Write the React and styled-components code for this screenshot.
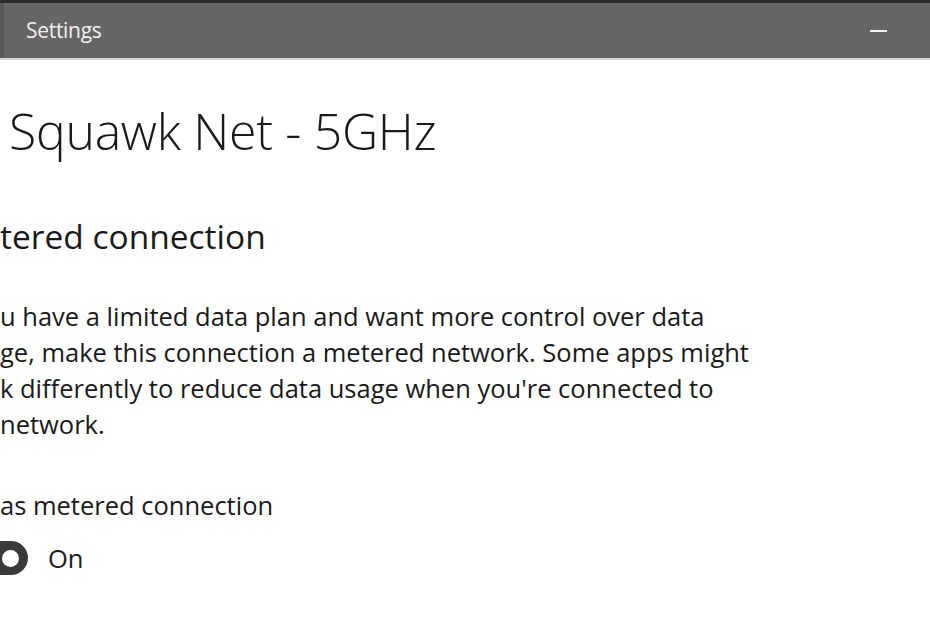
import React from 'react';
import styled, { createGlobalStyle } from 'styled-components';

const GlobalStyle = createGlobalStyle`
  html, body {
    margin: 0;
    padding: 0;
    background: #ffffff;
  }
  body {
    font-family: 'Open Sans', 'Noto Sans', sans-serif;
    color: #1b1b1b;
  }
`

const Window = styled.div`
  width: 930px;
  height: 620px;
  overflow: hidden;
  background: #ffffff;
  display: flex;
  flex-direction: column;
`

const TitleBar = styled.header`
  height: 55px;
  border-top: 3px solid #2b2b2b;
  border-bottom: 2px solid #d6d6d6;
  background: #666666;
  display: flex;
  align-items: center;
  flex-shrink: 0;
`

const EdgeStrip = styled.div`
  width: 4px;
  align-self: stretch;
  background: #585858;
`

const WindowTitle = styled.div`
  flex: 1;
  padding-left: 22px;
  font-size: 21px;
  color: #f0f0f0;
  letter-spacing: -0.3px;
  margin-top: -2px;
`

const Minimize = styled.button`
  width: 100px;
  height: 55px;
  border: 0;
  padding: 0;
  background: transparent;
  display: flex;
  align-items: center;
  justify-content: center;
  margin-right: 2px;

  span {
    display: block;
    width: 17px;
    height: 2px;
    background: #f2f2f2;
  }
`

const Page = styled.main`
  flex: 1;
  padding-top: 38px;
`

const Heading = styled.h1`
  margin: 0 0 0 9px;
  font-size: 50px;
  font-weight: 300;
  line-height: 66px;
  color: #1a1a1a;
  letter-spacing: -0.3px;
`

const Column = styled.section`
  display: flex;
  flex-direction: column;
`

const SubHeading = styled.h2`
  margin: 49px 0 0 0;
  font-size: 33.5px;
  font-weight: 400;
  line-height: 46px;
  color: #1a1a1a;
`

const Paragraph = styled.p`
  margin: 39px 0 0 0;
  font-size: 25.5px;
  line-height: 36px;
  color: #1a1a1a;
  white-space: nowrap;
`

const Label = styled.div`
  margin-top: 45px;
  font-size: 25.5px;
  line-height: 36px;
  color: #1a1a1a;
`

const ToggleRow = styled.div`
  margin-top: 18px;
  display: flex;
  align-items: center;
  gap: 20px;
`

const Toggle = styled.div`
  width: 28px;
  height: 34px;
  border-radius: 0 17px 17px 0;
  background: ${p => (p.on ? '#3b3b3b' : '#ffffff')};
  box-sizing: border-box;
  display: flex;
  align-items: center;
  justify-content: flex-end;
  padding: 0 9px 0 0;

  &::after {
    content: '';
    width: 17px;
    height: 17px;
    border-radius: 50%;
    background: ${p => (p.on ? '#ffffff' : '#3b3b3b')};
  }
`

const ToggleText = styled.span`
  font-size: 25.5px;
  color: #1a1a1a;
`

export default function App() {
  return (
    <>
      <GlobalStyle />
      <Window>
        <TitleBar>
          <EdgeStrip />
          <WindowTitle>Settings</WindowTitle>
          <Minimize aria-label="Minimize"><span /></Minimize>
        </TitleBar>
        <Page>
          <Heading>Squawk Net - 5GHz</Heading>
          <Column>
            <SubHeading>tered connection</SubHeading>
            <Paragraph>
              u have a limited data plan and want more control over data<br />
              ge, make this connection a metered network. Some apps might<br />
              k differently to reduce data usage when you're connected to<br />
              network.
            </Paragraph>
            <Label>as metered connection</Label>
            <ToggleRow>
              <Toggle on />
              <ToggleText>On</ToggleText>
            </ToggleRow>
          </Column>
        </Page>
      </Window>
    </>
  );
}
